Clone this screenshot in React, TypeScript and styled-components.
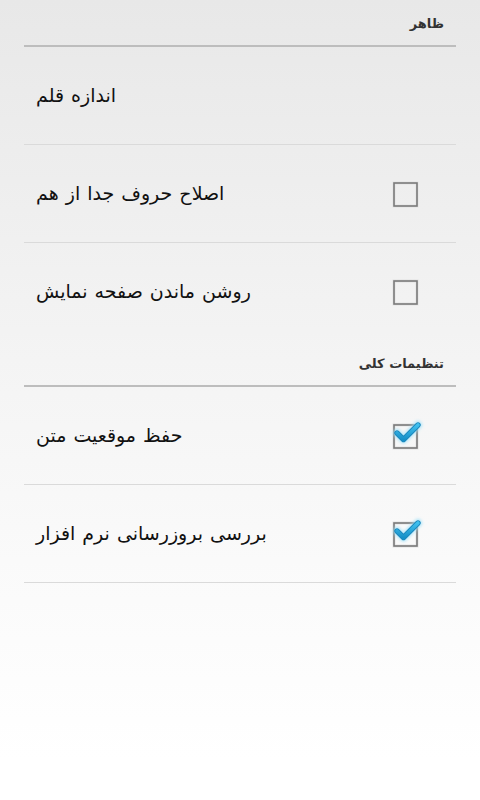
import React from "react";
import styled, { createGlobalStyle } from "styled-components";

const Global = createGlobalStyle`
  html, body { margin: 0; padding: 0; }
  body {
    width: 480px;
    height: 800px;
    overflow: hidden;
    font-family: "DejaVu Sans", "Noto Sans", sans-serif;
  }
`;

const Screen = styled.div`
  width: 480px;
  height: 800px;
  box-sizing: border-box;
  padding: 0 24px;
  background: linear-gradient(180deg, #e8e8e8 0%, #f4f4f4 45%, #fafafa 70%, #ffffff 95%);
  display: flex;
  flex-direction: column;
`;

const Category = styled.div`
  height: 45px;
  border-bottom: 2px solid #bdbdbd;
  display: flex;
  align-items: center;
  justify-content: flex-end;
  padding: 0 12px;
  box-sizing: content-box;
  flex: none;
`;

const CategoryTitle = styled.span`
  font-family: "DejaVu Sans", sans-serif;
  font-weight: bold;
  font-size: 13px;
  color: #333333;
  direction: rtl;
  position: relative;
  top: 1px;
`;

const Row = styled.div<{ $divider: boolean }>`
  height: 97px;
  display: flex;
  align-items: center;
  justify-content: space-between;
  padding: 0 39px 0 12px;
  border-bottom: ${(p) => (p.$divider ? "1px solid #dadada" : "none")};
  box-sizing: content-box;
  flex: none;
`;

const Title = styled.span`
  font-family: "DejaVu Sans", sans-serif;
  font-size: 19px;
  color: #111111;
  direction: rtl;
  word-spacing: 1px;
  position: relative;
  top: -1px;
`;

const Box = styled.div`
  width: 24px;
  height: 24px;
  position: relative;
  flex: none;
`;

const Svg = styled.svg`
  position: absolute;
  left: -2px;
  top: -8px;
  overflow: visible;
`;

function CheckBox({ checked }: { checked: boolean }) {
  return (
    <Box>
      <Svg width="32" height="34" viewBox="0 0 32 34">
        <defs>
          <filter id="glow" x="-50%" y="-50%" width="200%" height="200%">
            <feGaussianBlur stdDeviation="1.6" />
          </filter>
          <linearGradient id="blue" x1="0" y1="0" x2="0" y2="1">
            <stop offset="0" stopColor="#3fc0ee" />
            <stop offset="1" stopColor="#1790c8" />
          </linearGradient>
        </defs>
        <rect x="3" y="9" width="23" height="23" fill="none" stroke="#e2e2e2" strokeWidth="3" />
        <rect x="3" y="9" width="23" height="23" fill="none" stroke="#7a7a7a" strokeWidth="1.6" />
        {checked && (
          <g>
            <path
              d="M6 17 L12.5 23.5 L27 9"
              fill="none"
              stroke="#9ee0f8"
              strokeWidth="8"
              strokeLinecap="round"
              strokeLinejoin="round"
              filter="url(#glow)"
              opacity="0.8"
            />
            <path
              d="M6 17 L12.5 23.5 L27 9"
              fill="none"
              stroke="#1a87bd"
              strokeWidth="5.4"
              strokeLinecap="round"
              strokeLinejoin="round"
            />
            <path
              d="M6 17 L12.5 23.5 L27 9"
              fill="none"
              stroke="url(#blue)"
              strokeWidth="3.6"
              strokeLinecap="round"
              strokeLinejoin="round"
            />
          </g>
        )}
      </Svg>
    </Box>
  );
}

type Pref = { title: string; checkbox?: boolean; checked?: boolean };
type Section = { header: string; items: Pref[] };

const sections: Section[] = [
  {
    header: "ظاهر",
    items: [
      { title: "اندازه قلم" },
      { title: "اصلاح حروف جدا از هم", checkbox: true, checked: false },
      { title: "روشن ماندن صفحه نمایش", checkbox: true, checked: false },
    ],
  },
  {
    header: "تنظیمات کلی",
    items: [
      { title: "حفظ موقعیت متن", checkbox: true, checked: true },
      { title: "بررسی بروزرسانی نرم افزار", checkbox: true, checked: true },
    ],
  },
];

export default function App() {
  return (
    <>
      <Global />
      <Screen>
        {sections.map((s, si) => (
          <React.Fragment key={s.header}>
            <Category>
              <CategoryTitle>{s.header}</CategoryTitle>
            </Category>
            {s.items.map((it, i) => (
              <Row key={it.title} $divider={si === sections.length - 1 || i < s.items.length - 1}>
                <Title>{it.title}</Title>
                {it.checkbox && <CheckBox checked={!!it.checked} />}
              </Row>
            ))}
          </React.Fragment>
        ))}
      </Screen>
    </>
  );
}
